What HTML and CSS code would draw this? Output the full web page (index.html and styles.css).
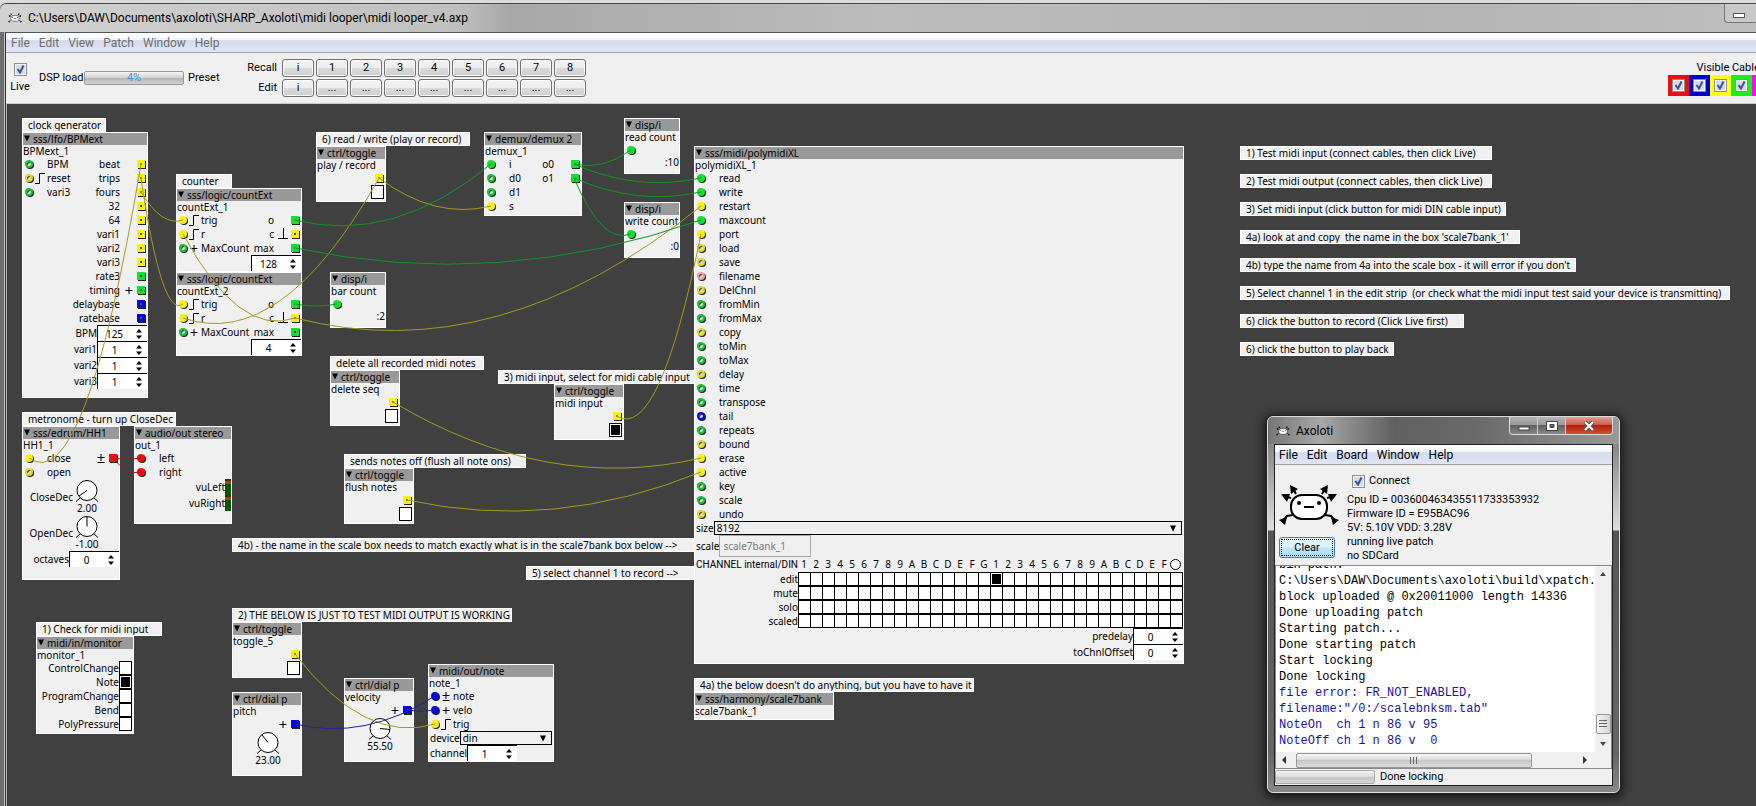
FILE: index.html
```html
<!DOCTYPE html>
<html lang="en">
<head>
<meta charset="utf-8">
<title>midi looper_v4.axp</title>
<link rel="stylesheet" href="styles.css">
</head>
<body>
<svg class="defs" aria-hidden="true">
  <symbol id="step" viewBox="0 0 10 12"><path d="M0 11.5H4.5V1.5H10" fill="none" stroke="#000"/></symbol>
  <symbol id="pulse" viewBox="0 0 10 12"><path d="M0 10.5H10M5.5 10.5V0" fill="none" stroke="#000"/></symbol>
  <symbol id="plus" viewBox="0 0 8 12"><path d="M.5 6.500H7.500M4 3V10" fill="none" stroke="#000"/></symbol>
  <symbol id="plusminus" viewBox="0 0 8 12"><path d="M.5 5.500H7.500M4 2V9M.5 10.500H7.500" fill="none" stroke="#000"/></symbol>
  <symbol id="arrows" viewBox="0 0 6 10"><path d="M3 0L6 3.500H0ZM3 10L0 6.500H6Z"/></symbol>
  <symbol id="tri" viewBox="0 0 8 8"><path d="M0 0H8L4 8Z"/></symbol>
  <symbol id="knob" viewBox="0 0 26 22"><circle cx="13" cy="10.500" r="10" fill="#fff" stroke="#000"/><path d="M6 18L2 21.500M20 18L24 21.500" stroke="#000"/></symbol>
  <symbol id="axo" viewBox="0 0 60 40">
    <path d="M12 13L4 11M17 9L13 2M43 9L47 2M48 13L56 11M14 30L8 31L3 37M46 30L52 31L57 37" fill="none" stroke="#000" stroke-width="2"/>
    <path d="M2 9L11 9L8 17ZM11 0L19 4L12 9ZM49 0L41 4L48 9ZM58 9L49 9L52 17ZM0 35L8 32L6 40ZM60 35L52 32L54 40Z"/>
    <rect x="12" y="10" width="36" height="24" rx="11" fill="#fff" stroke="#000" stroke-width="2"/>
    <circle cx="20" cy="18" r="2"/><circle cx="40" cy="18" r="2"/><path d="M25 22H35" stroke="#000" stroke-width="2"/>
  </symbol>
</svg>

<div class="behind"></div>
<div class="window">
  <header class="titlebar">
    <svg class="logo"><use href="#axo"/></svg>
    <h1>C:\Users\DAW\Documents\axoloti\SHARP_Axoloti\midi looper\midi looper_v4.axp</h1>
    <button class="minimise" aria-label="Minimise"><i></i></button>
  </header>
  <div class="client">
    <nav class="menubar">
      <button>File</button><button>Edit</button><button>View</button><button>Patch</button><button>Window</button><button>Help</button>
    </nav>
    <div class="toolbar">
      <label class="live"><input type="checkbox" class="check" checked>Live</label>
      <span class="dsp">DSP load</span>
      <div class="load" role="progressbar" aria-valuenow="4">4%</div>
      <span class="preset">Preset</span>
      <div class="presets">
        <span>Recall</span><button>i</button><button>1</button><button>2</button><button>3</button><button>4</button><button>5</button><button>6</button><button>7</button><button>8</button>
        <span>Edit</span><button>i</button><button>...</button><button>...</button><button>...</button><button>...</button><button>...</button><button>...</button><button>...</button><button>...</button>
      </div>
      <div class="cablebox">
        <span>Visible Cables</span>
        <div class="swatches">
          <label class="bg-red"><input type="checkbox" class="check" aria-label="Red" checked></label>
          <label class="bg-blue"><input type="checkbox" class="check" aria-label="Blue" checked></label>
          <label class="bg-yellow"><input type="checkbox" class="check" aria-label="Yellow" checked></label>
          <label class="bg-green"><input type="checkbox" class="check" aria-label="Green" checked></label>
          <label class="bg-magenta"><input type="checkbox" class="check" aria-label="Magenta" checked></label>
          <label class="bg-magenta"><input type="checkbox" class="check" aria-label="Other" checked></label>
        </div>
      </div>
    </div>

    <main class="patch">
      <p class="note" id="c-clock">clock generator</p>
      <section class="node" id="bpm">
        <h2><svg><use href="#tri"/></svg>sss/lfo/BPMext</h2><h3>BPMext_1</h3>
        <ul>
          <li><i class="in green"></i><b></b><span>BPM</span><em>beat</em><b></b><i class="out yellow on"></i></li>
          <li><i class="in yellow"></i><b><svg><use href="#step"/></svg></b><span>reset</span><em>trips</em><b></b><i class="out yellow on"></i></li>
          <li><i class="in green"></i><b></b><span>vari3</span><em>fours</em><b></b><i class="out yellow on"></i></li>
          <li><em>32</em><b></b><i class="out yellow"></i></li>
          <li><em>64</em><b></b><i class="out yellow"></i></li>
          <li><em>vari1</em><b></b><i class="out yellow"></i></li>
          <li><em>vari2</em><b></b><i class="out yellow"></i></li>
          <li><em>vari3</em><b></b><i class="out yellow"></i></li>
          <li><em>rate3</em><b></b><i class="out green"></i></li>
          <li><em>timing</em><b><svg class="sm"><use href="#plus"/></svg></b><i class="out green"></i></li>
          <li><em>delaybase</em><b></b><i class="out blue"></i></li>
          <li><em>ratebase</em><b></b><i class="out blue"></i></li>
        </ul>
        <label class="param">BPM<span class="spin"><input value="125"><svg><use href="#arrows"/></svg></span></label>
        <label class="param">vari1<span class="spin"><input value="1"><svg><use href="#arrows"/></svg></span></label>
        <label class="param">vari2<span class="spin"><input value="1"><svg><use href="#arrows"/></svg></span></label>
        <label class="param">vari3<span class="spin"><input value="1"><svg><use href="#arrows"/></svg></span></label>
      </section>

      <p class="note" id="c-counter">counter</p>
      <section class="node" id="count1">
        <h2><svg><use href="#tri"/></svg>sss/logic/countExt</h2><h3>countExt_1</h3>
        <ul>
          <li><i class="in yellow on"></i><b><svg><use href="#step"/></svg></b><span>trig</span><em>o</em><b></b><i class="out green on"></i></li>
          <li><i class="in yellow on"></i><b><svg><use href="#step"/></svg></b><span>r</span><em>c</em><b><svg><use href="#pulse"/></svg></b><i class="out yellow"></i></li>
          <li><i class="in green"></i><b><svg class="sm"><use href="#plus"/></svg></b><span>MaxCount</span><em>max</em><b></b><i class="out green on"></i></li>
        </ul>
        <label class="param"><span class="spin"><input value="128" aria-label="MaxCount"><svg><use href="#arrows"/></svg></span></label>
      </section>
      <section class="node" id="count2">
        <h2><svg><use href="#tri"/></svg>sss/logic/countExt</h2><h3>countExt_2</h3>
        <ul>
          <li><i class="in yellow on"></i><b><svg><use href="#step"/></svg></b><span>trig</span><em>o</em><b></b><i class="out green on"></i></li>
          <li><i class="in yellow on"></i><b><svg><use href="#step"/></svg></b><span>r</span><em>c</em><b><svg><use href="#pulse"/></svg></b><i class="out yellow on"></i></li>
          <li><i class="in green"></i><b><svg class="sm"><use href="#plus"/></svg></b><span>MaxCount</span><em>max</em><b></b><i class="out green"></i></li>
        </ul>
        <label class="param"><span class="spin"><input value="4" aria-label="MaxCount"><svg><use href="#arrows"/></svg></span></label>
      </section>

      <p class="note" id="c-rw">6) read / write (play or record)</p>
      <section class="node toggle" id="play">
        <h2><svg><use href="#tri"/></svg>ctrl/toggle</h2><h3>play / record</h3>
        <ul><li><i class="out yellow on"></i></li></ul>
        <input type="checkbox" class="box" aria-label="play / record">
      </section>
      <section class="node" id="demux">
        <h2><svg><use href="#tri"/></svg>demux/demux 2</h2><h3>demux_1</h3>
        <ul>
          <li><i class="in green on"></i><b></b><span>i</span><em>o0</em><b></b><i class="out green on"></i></li>
          <li><i class="in green"></i><b></b><span>d0</span><em>o1</em><b></b><i class="out green on"></i></li>
          <li><i class="in green"></i><b></b><span>d1</span></li>
          <li><i class="in yellow on"></i><b></b><span>s</span></li>
        </ul>
      </section>
      <section class="node" id="dread">
        <h2><svg><use href="#tri"/></svg>disp/i</h2><h3>read count</h3>
        <ul><li><i class="in green on"></i></li></ul><output>:10</output>
      </section>
      <section class="node" id="dwrite">
        <h2><svg><use href="#tri"/></svg>disp/i</h2><h3>write count</h3>
        <ul><li><i class="in green on"></i></li></ul><output>:0</output>
      </section>
      <section class="node" id="dbar">
        <h2><svg><use href="#tri"/></svg>disp/i</h2><h3>bar count</h3>
        <ul><li><i class="in green on"></i></li></ul><output>:2</output>
      </section>

      <p class="note" id="c-delete">delete all recorded midi notes</p>
      <section class="node toggle" id="delete">
        <h2><svg><use href="#tri"/></svg>ctrl/toggle</h2><h3>delete seq</h3>
        <ul><li><i class="out yellow on"></i></li></ul>
        <input type="checkbox" class="box" aria-label="delete seq">
      </section>
      <p class="note" id="c-input">3) midi input, select for midi cable input</p>
      <section class="node toggle" id="minput">
        <h2><svg><use href="#tri"/></svg>ctrl/toggle</h2><h3>midi input</h3>
        <ul><li><i class="out yellow on"></i></li></ul>
        <input type="checkbox" class="box" aria-label="midi input" checked>
      </section>
      <p class="note" id="c-flush">sends notes off (flush all note ons)</p>
      <section class="node toggle" id="flush">
        <h2><svg><use href="#tri"/></svg>ctrl/toggle</h2><h3>flush notes</h3>
        <ul><li><i class="out yellow on"></i></li></ul>
        <input type="checkbox" class="box" aria-label="flush notes">
      </section>

      <p class="note" id="c-metro">metronome - turn up CloseDec</p>
      <section class="node" id="hh">
        <h2><svg><use href="#tri"/></svg>sss/edrum/HH1</h2><h3>HH1_1</h3>
        <ul>
          <li><i class="in yellow on"></i><b></b><span>close</span><em></em><b><svg class="sm"><use href="#plusminus"/></svg></b><i class="out red on"></i></li>
          <li><i class="in yellow"></i><b></b><span>open</span></li>
        </ul>
        <div class="dial"><span>CloseDec</span><figure><svg><use href="#knob"/><path d="M13 11.500L5 17" stroke="#000"/></svg><figcaption>2.00</figcaption></figure></div>
        <div class="dial"><span>OpenDec</span><figure><svg><use href="#knob"/><path d="M13 11.500V2" stroke="#000"/></svg><figcaption>-1.00</figcaption></figure></div>
        <label class="param">octaves<span class="spin"><input value="0"><svg><use href="#arrows"/></svg></span></label>
      </section>
      <section class="node" id="out">
        <h2><svg><use href="#tri"/></svg>audio/out stereo</h2><h3>out_1</h3>
        <ul>
          <li><i class="in red on"></i><b></b><span>left</span></li>
          <li><i class="in red on"></i><b></b><span>right</span></li>
        </ul>
        <div class="vu">vuLeft<i></i></div>
        <div class="vu">vuRight<i></i></div>
      </section>

      <p class="note" id="c-4b">4b) - the name in the scale box needs to match exactly what is in the scale7bank box below --&gt;</p>
      <p class="note" id="c-5">5) select channel 1 to record --&gt;</p>

      <p class="note" id="c-check">1) Check for midi input</p>
      <section class="node" id="monitor">
        <h2><svg><use href="#tri"/></svg>midi/in/monitor</h2><h3>monitor_1</h3>
        <label class="led">ControlChange<input type="checkbox" class="box"></label>
        <label class="led">Note<input type="checkbox" class="box" checked></label>
        <label class="led">ProgramChange<input type="checkbox" class="box"></label>
        <label class="led">Bend<input type="checkbox" class="box"></label>
        <label class="led">PolyPressure<input type="checkbox" class="box"></label>
      </section>

      <p class="note" id="c-2">2) THE BELOW IS JUST TO TEST MIDI OUTPUT IS WORKING</p>
      <section class="node toggle" id="toggle5">
        <h2><svg><use href="#tri"/></svg>ctrl/toggle</h2><h3>toggle_5</h3>
        <ul><li><i class="out yellow on"></i></li></ul>
        <input type="checkbox" class="box" aria-label="toggle_5">
      </section>
      <section class="node" id="pitch">
        <h2><svg><use href="#tri"/></svg>ctrl/dial p</h2><h3>pitch</h3>
        <ul><li><b><svg class="sm"><use href="#plus"/></svg></b><i class="out blue on"></i></li></ul>
        <div class="dial mid"><figure><svg><use href="#knob"/><path d="M13 11.500L7 4" stroke="#000"/></svg><figcaption>23.00</figcaption></figure></div>
      </section>
      <section class="node" id="velocity">
        <h2><svg><use href="#tri"/></svg>ctrl/dial p</h2><h3>velocity</h3>
        <ul><li><b><svg class="sm"><use href="#plus"/></svg></b><i class="out blue on"></i></li></ul>
        <div class="dial mid"><figure><svg><use href="#knob"/><path d="M13 11.500L23 12.500" stroke="#000"/></svg><figcaption>55.50</figcaption></figure></div>
      </section>
      <section class="node" id="mnote">
        <h2><svg><use href="#tri"/></svg>midi/out/note</h2><h3>note_1</h3>
        <ul>
          <li><i class="in blue on"></i><b><svg class="sm"><use href="#plusminus"/></svg></b><span>note</span></li>
          <li><i class="in blue on"></i><b><svg class="sm"><use href="#plus"/></svg></b><span>velo</span></li>
          <li><i class="in yellow on"></i><b><svg><use href="#step"/></svg></b><span>trig</span></li>
        </ul>
        <label class="attr">device<span class="drop"><select><option>din</option></select><svg><use href="#tri"/></svg></span></label>
        <label class="attr">channel<span class="spin"><input value="1"><svg><use href="#arrows"/></svg></span></label>
      </section>

      <section class="node" id="poly">
        <h2><svg><use href="#tri"/></svg>sss/midi/polymidiXL</h2><h3>polymidiXL_1</h3>
        <ul>
          <li><i class="in green on"></i><b></b><span>read</span></li>
          <li><i class="in green on"></i><b></b><span>write</span></li>
          <li><i class="in yellow on"></i><b></b><span>restart</span></li>
          <li><i class="in green on"></i><b></b><span>maxcount</span></li>
          <li><i class="in yellow on"></i><b></b><span>port</span></li>
          <li><i class="in yellow"></i><b></b><span>load</span></li>
          <li><i class="in yellow"></i><b></b><span>save</span></li>
          <li><i class="in pink"></i><b></b><span>filename</span></li>
          <li><i class="in yellow"></i><b></b><span>DelChnl</span></li>
          <li><i class="in green"></i><b></b><span>fromMin</span></li>
          <li><i class="in green"></i><b></b><span>fromMax</span></li>
          <li><i class="in yellow"></i><b></b><span>copy</span></li>
          <li><i class="in green"></i><b></b><span>toMin</span></li>
          <li><i class="in green"></i><b></b><span>toMax</span></li>
          <li><i class="in yellow"></i><b></b><span>delay</span></li>
          <li><i class="in green"></i><b></b><span>time</span></li>
          <li><i class="in green"></i><b></b><span>transpose</span></li>
          <li><i class="in blue"></i><b></b><span>tail</span></li>
          <li><i class="in green"></i><b></b><span>repeats</span></li>
          <li><i class="in yellow"></i><b></b><span>bound</span></li>
          <li><i class="in yellow on"></i><b></b><span>erase</span></li>
          <li><i class="in yellow on"></i><b></b><span>active</span></li>
          <li><i class="in green"></i><b></b><span>key</span></li>
          <li><i class="in green"></i><b></b><span>scale</span></li>
          <li><i class="in yellow"></i><b></b><span>undo</span></li>
        </ul>
        <label class="attr">size<span class="drop"><select><option>8192</option></select><svg><use href="#tri"/></svg></span></label>
        <label class="attr">scale<input class="field" value="scale7bank_1" disabled></label>
        <table class="matrix" id="matrix"></table>
        <label class="param">predelay<span class="spin"><input value="0"><svg><use href="#arrows"/></svg></span></label>
        <label class="param">toChnlOffset<span class="spin"><input value="0"><svg><use href="#arrows"/></svg></span></label>
      </section>
      <p class="note" id="c-4a">4a) the below doesn't do anything, but you have to have it</p>
      <section class="node" id="bank">
        <h2><svg><use href="#tri"/></svg>sss/harmony/scale7bank</h2><h3>scale7bank_1</h3>
      </section>

      <p class="note" id="s1">1) Test midi input (connect cables, then click Live)</p>
      <p class="note" id="s2">2) Test midi output (connect cables, then click Live)</p>
      <p class="note" id="s3">3) Set midi input (click button for midi DIN cable input)</p>
      <p class="note" id="s4">4a) look at and copy  the name in the box 'scale7bank_1'</p>
      <p class="note" id="s5">4b) type the name from 4a into the scale box - it will error if you don't</p>
      <p class="note" id="s6">5) Select channel 1 in the edit strip  (or check what the midi input test said your device is transmitting)</p>
      <p class="note" id="s7">6) click the button to record (Click Live first)</p>
      <p class="note" id="s8">6) click the button to play back</p>

      <svg class="cables" aria-hidden="true">
        <g transform="translate(-8 -104)">
          <g class="y">
            <path d="M141 164Q85 499 29 458"/><path d="M141 192Q162 227 183 220"/><path d="M141 178Q162 320 183 304"/>
            <path d="M295 318Q239 338 183 234"/><path d="M379 178Q281 352 183 318"/><path d="M295 318Q498 370 701 206"/>
            <path d="M379 178Q435 220 491 206"/><path d="M617 416Q659 442 701 234"/><path d="M393 402Q547 494 701 458"/>
            <path d="M407 500Q554 532 701 472"/><path d="M295 654Q365 745 435 724"/>
          </g>
          <g class="g">
            <path d="M295 220Q393 245 491 164"/><path d="M295 248Q498 291 701 220"/><path d="M295 304Q316 308 337 304"/>
            <path d="M574 164Q602 171 631 150"/><path d="M574 164Q637 192 701 178"/><path d="M574 178Q637 206 701 192"/><path d="M574 178Q602 245 631 234"/>
          </g>
          <g class="r"><path d="M113 458Q127 461 141 458"/><path d="M113 458Q127 476 141 472"/></g>
          <g class="b"><path d="M295 724Q365 741 435 696"/><path d="M407 710Q421 713 435 710"/></g>
        </g>
      </svg>

      <section class="dialog" id="axoloti">
        <header>
          <svg class="logo"><use href="#axo"/></svg><h2>Axoloti</h2>
          <div class="winbtns">
            <button aria-label="Minimise"><svg viewBox="0 0 12 12"><path d="M1 7H11V10H1Z" fill="#fff" stroke="#444"/></svg></button>
            <button aria-label="Maximise"><svg viewBox="0 0 12 12"><path d="M.5 1.500H11.500V10.500H.5ZM4 4.500H8V7.500H4Z" fill="#fff" fill-rule="evenodd" stroke="#444"/></svg></button>
            <button class="close" aria-label="Close"><svg viewBox="0 0 12 12"><path d="M2 2L10 10M10 2L2 10" stroke="#555" stroke-width="4"/><path d="M2 2L10 10M10 2L2 10" stroke="#fff" stroke-width="2"/></svg></button>
          </div>
        </header>
        <div class="pane">
          <nav class="menubar"><button>File</button><button>Edit</button><button>Board</button><button>Window</button><button>Help</button></nav>
          <div class="info">
            <div class="left"><svg class="big"><use href="#axo"/></svg><button class="clear">Clear</button></div>
            <div class="facts">
              <label><input type="checkbox" class="check" checked>Connect</label>
              <p>Cpu ID = 003600463435511733353932</p>
              <p>Firmware ID = E95BAC96</p>
              <p>5V: 5.10V VDD: 3.28V</p>
              <p>running live patch</p>
              <p>no SDCard</p>
            </div>
          </div>
          <div class="logbox">
            <div class="log"><pre>bin path:
C:\Users\DAW\Documents\axoloti\build\xpatch.bin
block uploaded @ 0x20011000 length 14336
Done uploading patch
Starting patch...
Done starting patch
Start locking
Done locking
<span>file error: FR_NOT_ENABLED,
filename:"/0:/scalebnksm.tab"
NoteOn  ch 1 n 86 v 95
NoteOff ch 1 n 86 v  0</span></pre></div>
            <div class="vbar"><i class="up"></i><i class="thumb"></i><i class="down"></i></div>
            <div class="hbar"><i class="prev"></i><i class="thumb"></i><i class="next"></i></div>
          </div>
          <footer><i></i>Done locking</footer>
        </div>
      </section>
    </main>
  </div>
</div>
<script src="matrix.js"></script>
</body>
</html>
```

FILE: styles.css
```css
* { box-sizing: border-box; }
body {
  margin: 0; height: 100vh; overflow: hidden; display: flex; flex-direction: column;
  font: 11px/14px Roboto, "Noto Sans", sans-serif; color: #000; background: #d8d8d8;
}
button, input, select { font: inherit; color: inherit; margin: 0; }
h1, h2, h3, p, ul, pre, figure { margin: 0; padding: 0; font-weight: normal; font-size: inherit; }
.defs { position: absolute; width: 0; height: 0; }

.behind { height: 3px; background: #dcdcdc; }
.window { flex: 1; min-height: 0; display: flex; flex-direction: column; background: linear-gradient(90deg, #6e6e6e 4px, #c0c0c0 4px); border-top: 1px solid #444; border-radius: 6px 0 0 0; }
.titlebar { display: flex; align-items: center; height: 28px; padding-left: 8px; gap: 6px; background: linear-gradient(90deg, #d2d2d2 0, #c0c0c0 26%, #a8a8a8 29%, #bcbcbc 50%, #b4b4b4 80%, #bebebe); border-radius: 6px 0 0 0; }
.titlebar h1 { font-size: 12px; line-height: 16px; }
.logo { width: 14px; height: 10px; }
.minimise { align-self: flex-start; display: flex; margin-left: auto; width: 32px; height: 19px; padding: 9px 0 0 8px; border: 1px solid #777; border-width: 0 0 1px 1px; border-radius: 0 0 0 4px; background: #c8c8c8; }
.minimise i { width: 12px; height: 5px; background: #fff; border: 1px solid #555; }
.client { flex: 1; min-height: 0; margin-left: 5px; display: flex; flex-direction: column; border: 1px solid #333; border-width: 1px 0 0 1px; border-top-color: #555; }
.menubar { display: flex; gap: 1px; height: 20px; padding-left: 1px; background: linear-gradient(#fff 0, #f4f6fb 35%, #d5dbed 40%, #dfe5f5); border-bottom: 1px solid #a0a0a0; }
.menubar button { border: 0; background: none; padding: 0 4px; font-size: 12px; line-height: 18px; color: #6d6d6d; }

.toolbar { display: flex; align-items: center; height: 51px; background: #f0f0f0; border-bottom: 1px solid #c8c8c8; overflow: hidden; padding-left: 3px; }
.check { appearance: none; display: block; flex: none; width: 13px; height: 13px; border: 1px solid #8e8f8f; box-shadow: inset 0 0 0 1px #f4f4f4; background: #d4dce6; }
.check:checked { background: url("data:image/svg+xml,%3Csvg xmlns='http://www.w3.org/2000/svg' viewBox='0 0 11 11'%3E%3Cpath d='M2.500 5L5 8.500L8.500 1.500' fill='none' stroke='%23405090' stroke-width='2'/%3E%3C/svg%3E") #d4dce6; }
.live { flex: none; display: flex; flex-direction: column; align-items: center; gap: 4px; width: 22px; }
.dsp { flex: none; margin-left: 8px; width: 45px; white-space: nowrap; }
.load { flex: none; width: 100px; height: 14px; line-height: 12px; text-align: center; color: #3a96e8; border: 1px solid #999; border-radius: 2px; background: linear-gradient(#f6f6f6, #d0d0d0 50%, #b4b4b4 55%, #d4d4d4); }
.preset { flex: none; margin-left: 4px; width: 54px; }
.presets { display: grid; grid-template-columns: 38px repeat(9, 32px); gap: 2px; align-items: center; }
.presets > span { text-align: right; padding-right: 3px; }
.presets button { height: 18px; padding: 0; line-height: 14px; border: 1px solid #707070; border-radius: 3px; background: linear-gradient(#f4f4f4, #ececec 48%, #dadada 52%, #cfcfcf); box-shadow: inset 0 0 0 1px #fafafa; }
.cablebox { flex: none; margin: 0 -38px 0 auto; display: flex; flex-direction: column; align-items: center; }
.swatches { display: flex; }
.swatches label { padding: 4px; width: 21px; height: 21px; }
.bg-red { background: #e81010; } .bg-blue { background: #0000c8; } .bg-yellow { background: #ffff20; } .bg-green { background: #18f018; } .bg-magenta { background: #f010f0; }

.patch { flex: 1; min-height: 0; position: relative; margin-left: 1px; background: #404040; border-left: 1px solid #333; font: 10px/12px "Noto Sans", "Open Sans", sans-serif; }
.note { position: absolute; height: 14px; padding: 0 5px; background: #f0f0f0; border: 1px solid #fff; white-space: pre; overflow: hidden; }
.node { position: absolute; display: flex; flex-direction: column; background: #f0f0f0; border: 1px solid #fff; white-space: nowrap; }
.node h2 { display: flex; align-items: center; gap: 3px; height: 12px; padding-left: 1px; background: #999; }
.node h2 svg { width: 6px; height: 7px; margin-bottom: 2px; }
.node h3 { height: 12px; }
.node ul { list-style: none; }
.node li { display: flex; align-items: center; height: 14px; padding: 0 2px; }
.node li b { width: 16px; height: 12px; display: flex; justify-content: center; }
.node li .in + b { width: 14px; }
.node em { font-style: normal; margin-left: auto; padding-right: 1px; }
.node li > b:first-child, .node li > i.out:first-child { margin-left: auto; }
li svg { width: 10px; height: 12px; }
li svg.sm { width: 8px; }
.in, .out { flex: none; width: 8px; height: 8px; border: 2px solid var(--c); background: #ddd; box-shadow: 1px 1px 0 #222; }
.in { border-radius: 50%; box-shadow: 1px 1px 0 #222, inset 1px 1px 0 #333; }
.out { background: #553; border-width: 3px; }
.in.on { background: var(--c); box-shadow: 1px 1px 0 #222; }
.out.on { background: #886; }
.out.red.on, .out.blue.on { background: var(--c); }
.green { --c: #10e030; } .yellow { --c: #f8f010; } .blue { --c: #0808d8; } .red { --c: #f01010; } .pink { --c: #e8a0a0; }
.in:not(.on).yellow { --c: #e0d820; } .in:not(.on).green { --c: #18c038; }

.param { display: flex; justify-content: flex-end; align-items: center; height: 16px; }
.spin { position: relative; width: 50px; height: 16px; border: 1px solid #000; border-width: 1px 0 0 1px; background: #fff; }
.spin input { display: block; width: 33px; height: 15px; padding: 0; border: 0; background: none; text-align: center; }
.spin svg { position: absolute; right: 5px; top: 3px; width: 6px; height: 10px; }
.attr { display: flex; align-items: center; padding-left: 1px; }
.drop { position: relative; flex: 1; height: 14px; border: 1px solid #000; margin-right: 1px; }
.drop select { display: block; appearance: none; width: 100%; height: 12px; padding: 0 2px; border: 0; background: none; line-height: 12px; }
.drop svg { position: absolute; right: 5px; top: 3px; width: 6px; height: 7px; }
.field { width: 92px; height: 22px; padding: 0 3px; border: 1px solid #aaa; background: #f0f0f0; color: #777; }
.box { appearance: none; display: block; flex: none; width: 13px; height: 14px; border: 1px solid #000; background: #fff; }
.box:checked { background: #000; box-shadow: inset 0 0 0 1px #fff; }
.toggle > .box { align-self: flex-end; margin-right: 1px; }
output { text-align: right; line-height: 10px; }
.led { display: flex; justify-content: flex-end; height: 14px; padding-right: 1px; line-height: 14px; }
.dial { display: flex; justify-content: flex-end; padding-right: 18px; height: 36px; align-items: center; }
.dial.mid { justify-content: center; padding: 0 0 0 2px; }
.dial figure { width: 28px; height: 36px; display: flex; flex-direction: column; align-items: center; white-space: nowrap; }
.dial figure svg { width: 26px; height: 24px; }
.dial figcaption { line-height: 11px; }
.vu { display: flex; justify-content: flex-end; align-items: center; height: 16px; }
.vu i { width: 6px; height: 16px; background: linear-gradient(#701010 2px, #706010 2px 5px, #005800 5px); }
.matrix { align-self: flex-end; margin-right: 1px; border-collapse: collapse; }
.matrix th { padding: 0; font-weight: normal; text-align: right; height: 14px; line-height: 14px; }
.matrix thead th { height: 15px; line-height: 15px; font-family: Roboto, sans-serif; }
.matrix thead th + th { text-align: center; width: 12px; font-family: inherit; }
.matrix td { padding: 0; width: 12px; height: 14px; }
.matrix .box { width: 13px; margin-right: -1px; }
.ring { display: block; width: 11px; height: 11px; border: 1px solid #000; border-radius: 50%; background: #fff; }

.cables { position: absolute; inset: 0; width: 100%; height: 100%; pointer-events: none; fill: none; }
.y { stroke: #a09c20; } .g { stroke: #149428; } .r { stroke: #a01818; } .b { stroke: #2020a0; }

#c-clock { left: 14px; top: 14px; width: 84px; }
#bpm { left: 14px; top: 28px; width: 126px; min-height: 266px; }
#c-counter { left: 168px; top: 70px; width: 56px; }
#count1 { left: 168px; top: 84px; width: 126px; min-height: 84px; }
#count2 { left: 168px; top: 168px; width: 126px; min-height: 84px; }
#c-rw { left: 308px; top: 28px; width: 154px; }
#play { left: 308px; top: 42px; width: 70px; min-height: 56px; }
#demux { left: 476px; top: 28px; width: 98px; min-height: 84px; }
#dread { left: 616px; top: 14px; width: 56px; min-height: 56px; }
#dwrite { left: 616px; top: 98px; width: 56px; min-height: 56px; }
#dbar { left: 322px; top: 168px; width: 56px; min-height: 56px; }
#c-delete { left: 322px; top: 252px; width: 154px; }
#delete { left: 322px; top: 266px; width: 70px; min-height: 56px; }
#c-input { left: 490px; top: 266px; width: 210px; }
#minput { left: 546px; top: 280px; width: 70px; min-height: 56px; }
#c-flush { left: 336px; top: 350px; width: 182px; }
#flush { left: 336px; top: 364px; width: 70px; min-height: 56px; }
#c-metro { left: 14px; top: 308px; width: 154px; }
#hh { left: 14px; top: 322px; width: 98px; min-height: 154px; }
#out { left: 126px; top: 322px; width: 98px; min-height: 98px; }
#c-4b { left: 224px; top: 434px; width: 476px; }
#c-5 { left: 518px; top: 462px; width: 182px; }
#c-check { left: 28px; top: 518px; width: 126px; }
#monitor { left: 28px; top: 532px; width: 98px; min-height: 98px; }
#c-2 { left: 224px; top: 504px; width: 280px; }
#toggle5 { left: 224px; top: 518px; width: 70px; min-height: 56px; }
#pitch { left: 224px; top: 588px; width: 70px; min-height: 84px; }
#velocity { left: 336px; top: 574px; width: 70px; min-height: 84px; }
#mnote { left: 420px; top: 560px; width: 126px; min-height: 98px; }
#poly { left: 686px; top: 42px; width: 490px; min-height: 518px; }
#c-4a { left: 686px; top: 574px; width: 280px; }
#bank { left: 686px; top: 588px; width: 140px; min-height: 28px; }
#s1 { left: 1232px; top: 42px; width: 252px; }
#s2 { left: 1232px; top: 70px; width: 252px; }
#s3 { left: 1232px; top: 98px; width: 266px; }
#s4 { left: 1232px; top: 126px; width: 280px; }
#s5 { left: 1232px; top: 154px; width: 336px; }
#s6 { left: 1232px; top: 182px; width: 490px; }
#s7 { left: 1232px; top: 210px; width: 224px; }
#s8 { left: 1232px; top: 238px; width: 154px; }

#axoloti { left: 1259px; top: 312px; width: 353px; }
.dialog { position: absolute; padding: 0 6px 6px; border: 1px solid #ddd; border-radius: 6px; background: linear-gradient(#999 0, #888 8%, #ddd 30%, #555 30.5%, #666 90%, #888); box-shadow: 0 0 0 1px #222, 0 2px 10px 3px #181818; font: 11px/14px Roboto, "Noto Sans", sans-serif; }
.dialog header { display: flex; align-items: center; height: 27px; gap: 6px; margin: 0 -6px; padding: 0 6px 0 8px; background: linear-gradient(90deg, #777, #a8a8a8 15%, #888 24%, #606060 36%, #6a6a6a 60%, #999); border-radius: 5px 5px 0 0; }
.dialog header h2 { font-size: 12px; }
.winbtns { display: flex; align-self: flex-start; margin-left: auto; border: 1px solid #ddd; border-top: 0; border-radius: 0 0 4px 4px; overflow: hidden; }
.winbtns button { display: flex; align-items: center; justify-content: center; width: 28px; height: 17px; padding: 0; border: 0; border-right: 1px solid #ccc; background: linear-gradient(#b4b4b4, #999 45%, #606060 50%, #888); }
.winbtns .close { width: 46px; border: 0; background: linear-gradient(#e0a090, #cc6050 45%, #b02010 50%, #d05030); }
.winbtns svg { width: 12px; height: 12px; }
.pane { border: 1px solid #222; background: #f0f0f0; }
.dialog .menubar { padding-left: 0; }
.dialog .menubar button { color: #000; }
.info { display: flex; gap: 12px; height: 100px; padding: 9px 0 0 4px; }
.left { display: flex; flex-direction: column; width: 56px; }
.big { width: 60px; height: 40px; margin: 11px 0 12px 0; }
.clear { height: 21px; padding: 0; line-height: 16px; border: 1px solid #3c7fb1; border-radius: 3px; background: linear-gradient(#eaf6fd, #d9f0fc 48%, #bee6fd 52%, #a7d9f5); outline: 1px dotted #000; outline-offset: -3px; }
.facts label { display: flex; align-items: center; gap: 4px; height: 14px; padding-left: 5px; margin-bottom: 5px; }
.logbox { display: grid; grid-template-columns: 1fr 16px; grid-template-rows: 186px 16px; background: #fff; border: 1px solid #888; }
.log { display: flex; flex-direction: column; justify-content: flex-end; overflow: hidden; min-width: 0; padding: 0 0 3px 3px; }
.log pre { font: 12px/16px "Liberation Mono", "Courier New", monospace; }
.log span { color: #1414a0; }
.vbar, .hbar { display: flex; background: #f0f0f0; align-items: center; justify-content: space-between; }
.vbar { flex-direction: column; padding: 6px 0; }
.hbar { grid-column: 1 / 3; padding: 0 24px 0 6px; }
.thumb { border: 1px solid #979797; border-radius: 2px; background: repeating-linear-gradient(#666 0 1px, transparent 1px 3px) center / 8px 9px no-repeat, linear-gradient(90deg, #f6f6f6, #d4d4d4); }
.vbar .thumb { width: 15px; height: 20px; margin-top: auto; margin-bottom: 8px; }
.hbar .thumb { width: 236px; height: 15px; margin-right: auto; margin-left: 10px; background: repeating-linear-gradient(90deg, #666 0 1px, transparent 1px 3px) center / 9px 7px no-repeat, linear-gradient(#f6f6f6, #dcdcdc 45%, #c8c8c8 50%, #dcdcdc); }
.up, .down { border: 3px solid transparent; }
.up { border-bottom: 4px solid #444; border-top: 0; }
.down { border-top: 4px solid #444; border-bottom: 0; }
.prev, .next { border: 4px solid transparent; }
.prev { border-right: 4px solid #333; border-left: 0; }
.next { border-left: 4px solid #333; border-right: 0; }
.dialog footer { display: flex; align-items: center; gap: 5px; height: 16px; }
.dialog footer i { width: 100px; height: 14px; border: 1px solid #aaa; border-radius: 2px; background: linear-gradient(#f0f0f0, #ddd 50%, #c4c4c4 55%, #d8d8d8); }
```

FILE: matrix.js
```js
// Channel strip: 16 internal channels, 15 DIN channels and a final "all" column.
const names = [..."123456789ABCDEFG", ..."123456789ABCDEF"];
const table = document.getElementById("matrix");
const head = table.createTHead().insertRow();
const th = (row, html) => {
  const cell = document.createElement("th");
  cell.innerHTML = html;
  row.append(cell);
};
th(head, "CHANNEL internal/DIN");
names.forEach((n) => th(head, n));
th(head, '<span class="ring"></span>');
const body = table.createTBody();
for (const strip of ["edit", "mute", "solo", "scaled"]) {
  const row = body.insertRow();
  th(row, strip);
  for (let i = 0; i < 32; i++) {
    const box = document.createElement("input");
    box.type = "checkbox";
    box.className = "box";
    box.checked = strip === "edit" && i === 16;
    box.setAttribute("aria-label", `${strip} ${i + 1}`);
    row.insertCell().append(box);
  }
}
```
